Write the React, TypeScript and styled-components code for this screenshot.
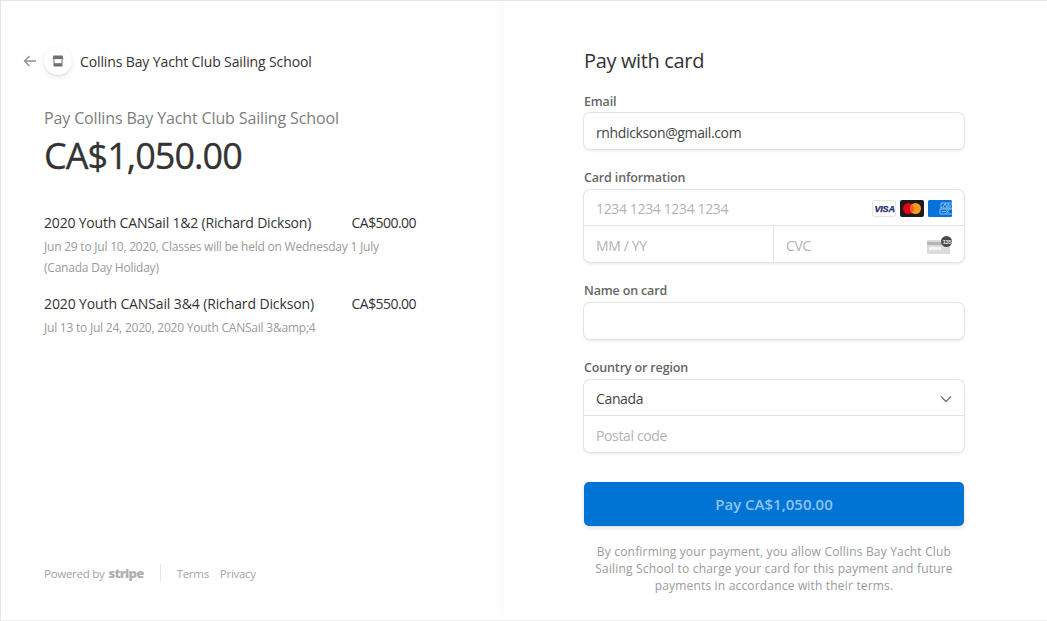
import React from "react";
import styled, { createGlobalStyle } from "styled-components";

const Global = createGlobalStyle`
  html, body { margin: 0; padding: 0; background: #fff; }
  * { box-sizing: border-box; }
`;

const Page = styled.div`
  width: 1047px;
  height: 621px;
  display: flex;
  overflow: hidden;
  font-family: "Open Sans", "Noto Sans", sans-serif;
  color: #1a1a1a;
  border-top: 1px solid #e6e6e6;
  border-left: 1px solid #e6e6e6;
  border-bottom: 1px solid #ececec;
`;

const Summary = styled.section`
  width: 503px;
  height: 100%;
  padding: 44px 0 0 22px;
  display: flex;
  flex-direction: column;
`;

const Header = styled.header`
  display: flex;
  align-items: center;
  height: 32px;
`;

const Back = styled.svg`
  width: 14px;
  height: 14px;
  margin-right: 7px;
  color: #8f8f8f;
`;

const Avatar = styled.div`
  width: 28px;
  height: 28px;
  border-radius: 50%;
  background: #fff;
  box-shadow: 0 2px 5px rgba(60, 66, 87, 0.12), 0 1px 1px rgba(0, 0, 0, 0.08);
  display: flex;
  align-items: center;
  justify-content: center;
  margin-right: 8px;
`;

const Merchant = styled.span`
  font-size: 14px;
  font-weight: 500;
  letter-spacing: -0.12px;
  color: #333;
`;

const Intro = styled.div`
  padding-left: 21px;
`;

const PayTo = styled.div`
  margin-top: 30px;
  height: 22px;
  line-height: 22px;
  font-size: 16px;
  font-weight: 500;
  letter-spacing: -0.14px;
  color: #7d7d7d;
`;

const Total = styled.div`
  margin-top: 5px;
  height: 44px;
  line-height: 44px;
  font-size: 36px;
  font-weight: 500;
  letter-spacing: -0.95px;
  -webkit-text-stroke: 0.3px #333;
  color: #333;
`;

const Items = styled.div`
  margin-top: 33px;
  width: 372px;
`;

const Item = styled.div`
  margin-bottom: 14px;
`;

const ItemRow = styled.div`
  display: flex;
  justify-content: space-between;
  height: 25px;
  line-height: 24px;
  font-size: 14px;
  font-weight: 500;
  color: #333;
`;

const ItemTitle = styled.span<{ $tracking: number }>`
  letter-spacing: ${(p) => p.$tracking}px;
`;

const Price = styled.span`
  letter-spacing: -0.55px;
`;

const ItemNote = styled.div`
  width: 345px;
  font-size: 12px;
  line-height: 21px;
  letter-spacing: -0.22px;
  color: #9a9a9a;
`;

const Footer = styled.footer`
  margin-top: auto;
  margin-bottom: 38px;
  padding-left: 21px;
  display: flex;
  align-items: center;
  font-size: 11.5px;
  letter-spacing: -0.28px;
  color: #a3a3a3;
  height: 18px;
`;

const Stripe = styled.span`
  font-weight: 800;
  font-size: 13px;
  letter-spacing: -0.7px;
  color: #b0b0b0;
  margin-left: 4px;
`;

const Divider = styled.span`
  width: 1px;
  height: 18px;
  background: #e6e6e6;
  margin: 0 16px;
`;

const FooterLink = styled.span`
  margin-right: 11px;
`;

const Checkout = styled.section`
  flex: 1;
  height: 100%;
  background: #fff;
  box-shadow: -6px 0 10px rgba(0, 0, 0, 0.018);
  padding: 47px 0 0 80px;
`;

const Form = styled.div`
  width: 380px;
`;

const Heading = styled.h1`
  margin: 0 0 18px;
  height: 26px;
  line-height: 26px;
  font-size: 20px;
  font-weight: 500;
  letter-spacing: -0.35px;
  color: #333;
`;

const Field = styled.div`
  margin-bottom: 19px;
`;

const Label = styled.div<{ $tight?: boolean }>`
  height: 20px;
  line-height: 20px;
  margin-bottom: ${(p) => (p.$tight ? 1 : 2)}px;
  font-size: 12.5px;
  font-weight: 600;
  letter-spacing: -0.15px;
  color: #666;
`;

const Box = styled.div`
  border-radius: 6px;
  background: #fff;
  box-shadow: 0 0 0 1px #e3e3e3, 0 2px 3px rgba(0, 0, 0, 0.09);
  overflow: hidden;
`;

const Row = styled.div<{ $h?: number }>`
  display: flex;
  height: ${(p) => p.$h ?? 36}px;
  & + & { border-top: 1px solid #e3e3e3; }
  & + & > div { padding-top: 0; }
`;

const Cell = styled.div<{ $half?: boolean; $muted?: boolean }>`
  flex: ${(p) => (p.$half ? "0 0 189px" : "1")};
  display: flex;
  align-items: center;
  justify-content: space-between;
  padding: 2px 12px 0;
  font-size: 14px;
  letter-spacing: -0.36px;
  color: ${(p) => (p.$muted ? "#b3b3b3" : "#444")};
  & + & { border-left: 1px solid #e3e3e3; }
`;

const Brands = styled.div`
  display: flex;
  gap: 4px;
`;

const BrandSvg = styled.svg`
  width: 24px;
  height: 17px;
  display: block;
`;

const BrandText = styled.text`
  font-family: "Liberation Sans", sans-serif;
  font-weight: 700;
  font-style: italic;
  font-size: 9px;
  letter-spacing: -0.2px;
  fill: #1a2a6c;
  stroke: #1a2a6c;
  stroke-width: 0.25;
`;

const CvcSvg = styled.svg`
  width: 25px;
  height: 18px;
  display: block;
`;

const CvcText = styled.text`
  font-family: "Liberation Sans", sans-serif;
  font-size: 6px;
  font-weight: 700;
  fill: #e6e6e6;
`;

const Pay = styled.button`
  display: block;
  width: 380px;
  height: 44px;
  margin: 30px 0 0 0;
  border: 0;
  border-radius: 5px;
  background: #0074d4;
  box-shadow: 0 2px 4px rgba(0, 0, 0, 0.14);
  color: #8fc4f2;
  font-family: inherit;
  font-size: 15px;
  font-weight: 600;
  letter-spacing: 0;
`;

const Terms = styled.p`
  margin: 17px auto 0;
  width: 368px;
  text-align: center;
  font-size: 12px;
  line-height: 17px;
  letter-spacing: 0.18px;
  color: #9a9a9a;
`;

export default function App() {
  return (
    <Page>
      <Global />
      <Summary>
        <Header>
          <Back viewBox="0 0 14 14" fill="none" stroke="currentColor" strokeWidth="1.4">
            <path d="M13 7H1.5M6.5 2 1.5 7l5 5" />
          </Back>
          <Avatar>
            <svg width="12" height="12" viewBox="0 0 12 12">
              <path d="M1.5 0.5h9L11.5 4.5H.5z" fill="#6f6f6f" />
              <path d="M1.5 5h9v6.5h-9z" fill="#6f6f6f" />
              <path d="M2.5 4.2h7v4h-7z" fill="#fff" />
            </svg>
          </Avatar>
          <Merchant>Collins Bay Yacht Club Sailing School</Merchant>
        </Header>
        <Intro>
          <PayTo>Pay Collins Bay Yacht Club Sailing School</PayTo>
          <Total>CA$1,050.00</Total>
          <Items>
            <Item>
              <ItemRow>
                <ItemTitle $tracking={-0.19}>2020 Youth CANSail 1&amp;2 (Richard Dickson)</ItemTitle>
                <Price>CA$500.00</Price>
              </ItemRow>
              <ItemNote>Jun 29 to Jul 10, 2020, Classes will be held on Wednesday 1 July (Canada Day Holiday)</ItemNote>
            </Item>
            <Item>
              <ItemRow>
                <ItemTitle $tracking={-0.12}>2020 Youth CANSail 3&amp;4 (Richard Dickson)</ItemTitle>
                <Price>CA$550.00</Price>
              </ItemRow>
              <ItemNote>Jul 13 to Jul 24, 2020, 2020 Youth CANSail 3&amp;amp;4</ItemNote>
            </Item>
          </Items>
        </Intro>
        <Footer>
          Powered by <Stripe>stripe</Stripe>
          <Divider />
          <FooterLink>Terms</FooterLink>
          <FooterLink>Privacy</FooterLink>
        </Footer>
      </Summary>
      <Checkout>
        <Form>
          <Heading>Pay with card</Heading>
          <Field>
            <Label $tight>Email</Label>
            <Box><Row><Cell>rnhdickson@gmail.com</Cell></Row></Box>
          </Field>
          <Field>
            <Label>Card information</Label>
            <Box>
              <Row $h={35}>
                <Cell $muted>
                  1234 1234 1234 1234
                  <Brands>
                    <BrandSvg viewBox="0 0 24 17">
                      <rect x=".5" y=".5" width="23" height="16" rx="1.5" fill="#fff" stroke="#e6e6e6" />
                      <BrandText x="2.5" y="12">VISA</BrandText>
                    </BrandSvg>
                    <BrandSvg viewBox="0 0 24 17">
                      <rect width="24" height="17" rx="2" fill="#1c1c1c" />
                      <circle cx="8.5" cy="8.5" r="5.5" fill="#e3001b" />
                      <circle cx="15.5" cy="8.5" r="5.5" fill="#f79a1e" />
                      <path d="M12 4.2a5.5 5.5 0 0 1 0 8.6 5.5 5.5 0 0 1 0-8.6z" fill="#f26122" />
                    </BrandSvg>
                    <BrandSvg viewBox="0 0 24 17">
                      <rect width="24" height="17" rx="1.5" fill="#0671d9" />
                      <path d="M13 3h11M13 8h11M12 9h12M12 14h12M13 3v5M12 9v5M15 7.5l2-4 2 4M20 7.5V3.5l2 3 2-3M14 11.5h4M18 9.5l3 4M21 9.5l-3 4" fill="none" stroke="#a9d0f5" strokeWidth=".8" />
                    </BrandSvg>
                  </Brands>
                </Cell>
              </Row>
              <Row $h={37}>
                <Cell $half $muted>MM / YY</Cell>
                <Cell $muted>
                  CVC
                  <CvcSvg viewBox="0 0 25 18">
                    <rect x="0" y="4" width="23" height="14" rx="1" fill="#dcdcdc" />
                    <rect x="0" y="6" width="23" height="3" fill="#b5b5b5" />
                    <rect x="2" y="11" width="12" height="3" fill="#f4f4f4" />
                    <circle cx="19.5" cy="5.5" r="5.5" fill="#4a4a4a" />
                    <CvcText x="15.4" y="7.6">135</CvcText>
                  </CvcSvg>
                </Cell>
              </Row>
            </Box>
          </Field>
          <Field>
            <Label>Name on card</Label>
            <Box><Row><Cell /></Row></Box>
          </Field>
          <Field>
            <Label>Country or region</Label>
            <Box>
              <Row $h={35}>
                <Cell>
                  Canada
                  <svg width="12" height="8" viewBox="0 0 12 8" fill="none" stroke="#777" strokeWidth="1.4">
                    <path d="M1 1.5l5 5 5-5" />
                  </svg>
                </Cell>
              </Row>
              <Row $h={37}><Cell $muted>Postal code</Cell></Row>
            </Box>
          </Field>
          <Pay>Pay CA$1,050.00</Pay>
          <Terms>
            By confirming your payment, you allow Collins Bay Yacht Club Sailing School to charge your card for this payment and future payments in accordance with their terms.
          </Terms>
        </Form>
      </Checkout>
    </Page>
  );
}
